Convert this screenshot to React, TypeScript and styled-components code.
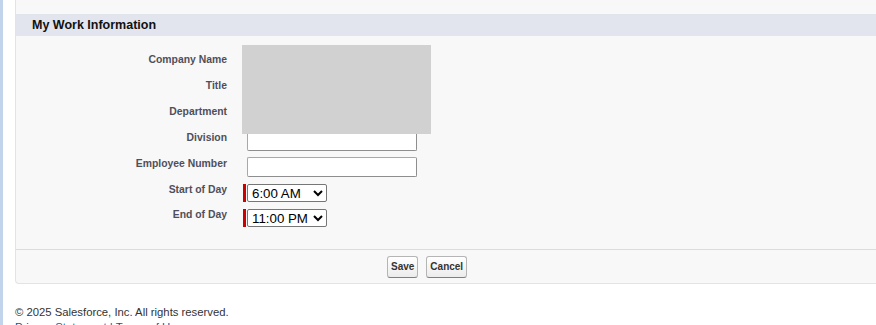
import React from 'react';
import styled, { createGlobalStyle } from 'styled-components';

const GlobalStyle = createGlobalStyle`
  body {
    margin: 0;
    background: #fff;
    font-family: "Liberation Sans", Arial, sans-serif;
    color: #222;
  }
`;

const Page = styled.div`
  display: flex;
  min-height: 325px;
  overflow: hidden;
`;

const SideStrip = styled.div`
  width: 3px;
  flex: 0 0 3px;
  background: #c2d3ec;
`;

const Main = styled.div`
  flex: 1;
  padding-left: 12px;
  min-width: 0;
`;

const Panel = styled.div`
  position: relative;
  background: #f8f8f8;
  border: 1px solid #e3e3e3;
  border-top: none;
  border-right: none;
  border-radius: 0 0 0 4px;
  padding-top: 14px;
`;

const SectionHeader = styled.div`
  height: 22px;
  display: flex;
  align-items: center;
  background: #e2e5ee;
  padding-left: 16px;

  h3 {
    margin: 0;
    font-size: 12.5px;
    font-weight: 700;
    color: #111;
  }
`;

const Form = styled.div`
  padding: 14px 0 19px;
`;

const Row = styled.div<{ $height: number }>`
  display: grid;
  grid-template-columns: 211px 1fr;
  column-gap: 16px;
  height: ${p => p.$height}px;
`;

const Label = styled.label`
  text-align: right;
  padding-top: 3px;
  font-size: 10.4px;
  line-height: 14px;
  font-weight: 700;
  color: #4f4f5b;
`;

const Field = styled.div<{ $top: number }>`
  display: flex;
  align-items: flex-start;
  padding-top: ${p => p.$top}px;
`;

const RequiredMark = styled.span<{ $on?: boolean }>`
  width: 3px;
  height: 18px;
  margin-right: 1px;
  background: ${p => (p.$on ? '#cc0000' : 'transparent')};
`;

const TextInput = styled.input`
  box-sizing: border-box;
  width: 170px;
  height: 20px;
  border: 1px solid #8e8e8e;
  border-top-color: #a8a8a8;
  border-left-color: #a8a8a8;
  border-radius: 2px;
  background: #fff;
  padding: 0 3px;
  font: 13px "Liberation Sans", Arial, sans-serif;
`;

const Select = styled.select`
  box-sizing: border-box;
  width: 80px;
  height: 18px;
  border: 1px solid #767676;
  border-radius: 2px;
  background: #fff;
  color: #000;
  padding: 0;
  font: 13.3px "Liberation Sans", Arial, sans-serif;
`;

const Redacted = styled.div`
  position: absolute;
  left: 226px;
  top: 45px;
  width: 189px;
  height: 89px;
  background: #d1d1d1;
`;

const ButtonBar = styled.div`
  border-top: 1px solid #dcdcdc;
  height: 33px;
  display: flex;
  align-items: center;
  gap: 8px;
  padding-left: 371px;
`;

const Button = styled.button`
  height: 22px;
  padding: 0 3px;
  border: 1px solid #b5b5b5;
  border-bottom-color: #7f7f7f;
  border-radius: 3px;
  background: linear-gradient(#ffffff, #ececec);
  font: 700 10px "Liberation Sans", Arial, sans-serif;
  color: #333;
`;

const Footer = styled.div`
  padding-top: 21px;
  font-size: 11.3px;
  line-height: 15px;
  color: #333;
`;

const FooterLinks = styled.div`
  color: #015ba7;
`;

type FieldDef = { label: string; kind: 'blank' | 'text' | 'select'; value?: string; options?: string[] };

const fields: FieldDef[] = [
  { label: 'Company Name', kind: 'blank' },
  { label: 'Title', kind: 'blank' },
  { label: 'Department', kind: 'blank' },
  { label: 'Division', kind: 'text' },
  { label: 'Employee Number', kind: 'text' },
  { label: 'Start of Day', kind: 'select', value: '6:00 AM', options: ['5:00 AM', '6:00 AM', '7:00 AM', '8:00 AM'] },
  { label: 'End of Day', kind: 'select', value: '11:00 PM', options: ['10:00 PM', '11:00 PM', '12:00 AM'] },
];

export default function App() {
  return (
    <Page>
      <GlobalStyle />
      <SideStrip />
      <Main>
        <Panel>
          <SectionHeader>
            <h3>My Work Information</h3>
          </SectionHeader>
          <Form>
            {fields.map(f => (
              <Row key={f.label} $height={f.kind === 'select' ? 25 : 26}>
                <Label>{f.label}</Label>
                <Field $top={f.kind === 'select' ? 4 : 3}>
                  <RequiredMark $on={f.kind === 'select'} />
                  {f.kind === 'text' && <TextInput type="text" />}
                  {f.kind === 'select' && (
                    <Select defaultValue={f.value}>
                      {f.options!.map(o => (
                        <option key={o}>{o}</option>
                      ))}
                    </Select>
                  )}
                </Field>
              </Row>
            ))}
          </Form>
          <Redacted />
          <ButtonBar>
            <Button>Save</Button>
            <Button>Cancel</Button>
          </ButtonBar>
        </Panel>
        <Footer>
          <div>© 2025 Salesforce, Inc. All rights reserved.</div>
          <FooterLinks>Privacy Statement | Terms of Use</FooterLinks>
        </Footer>
      </Main>
    </Page>
  );
}
